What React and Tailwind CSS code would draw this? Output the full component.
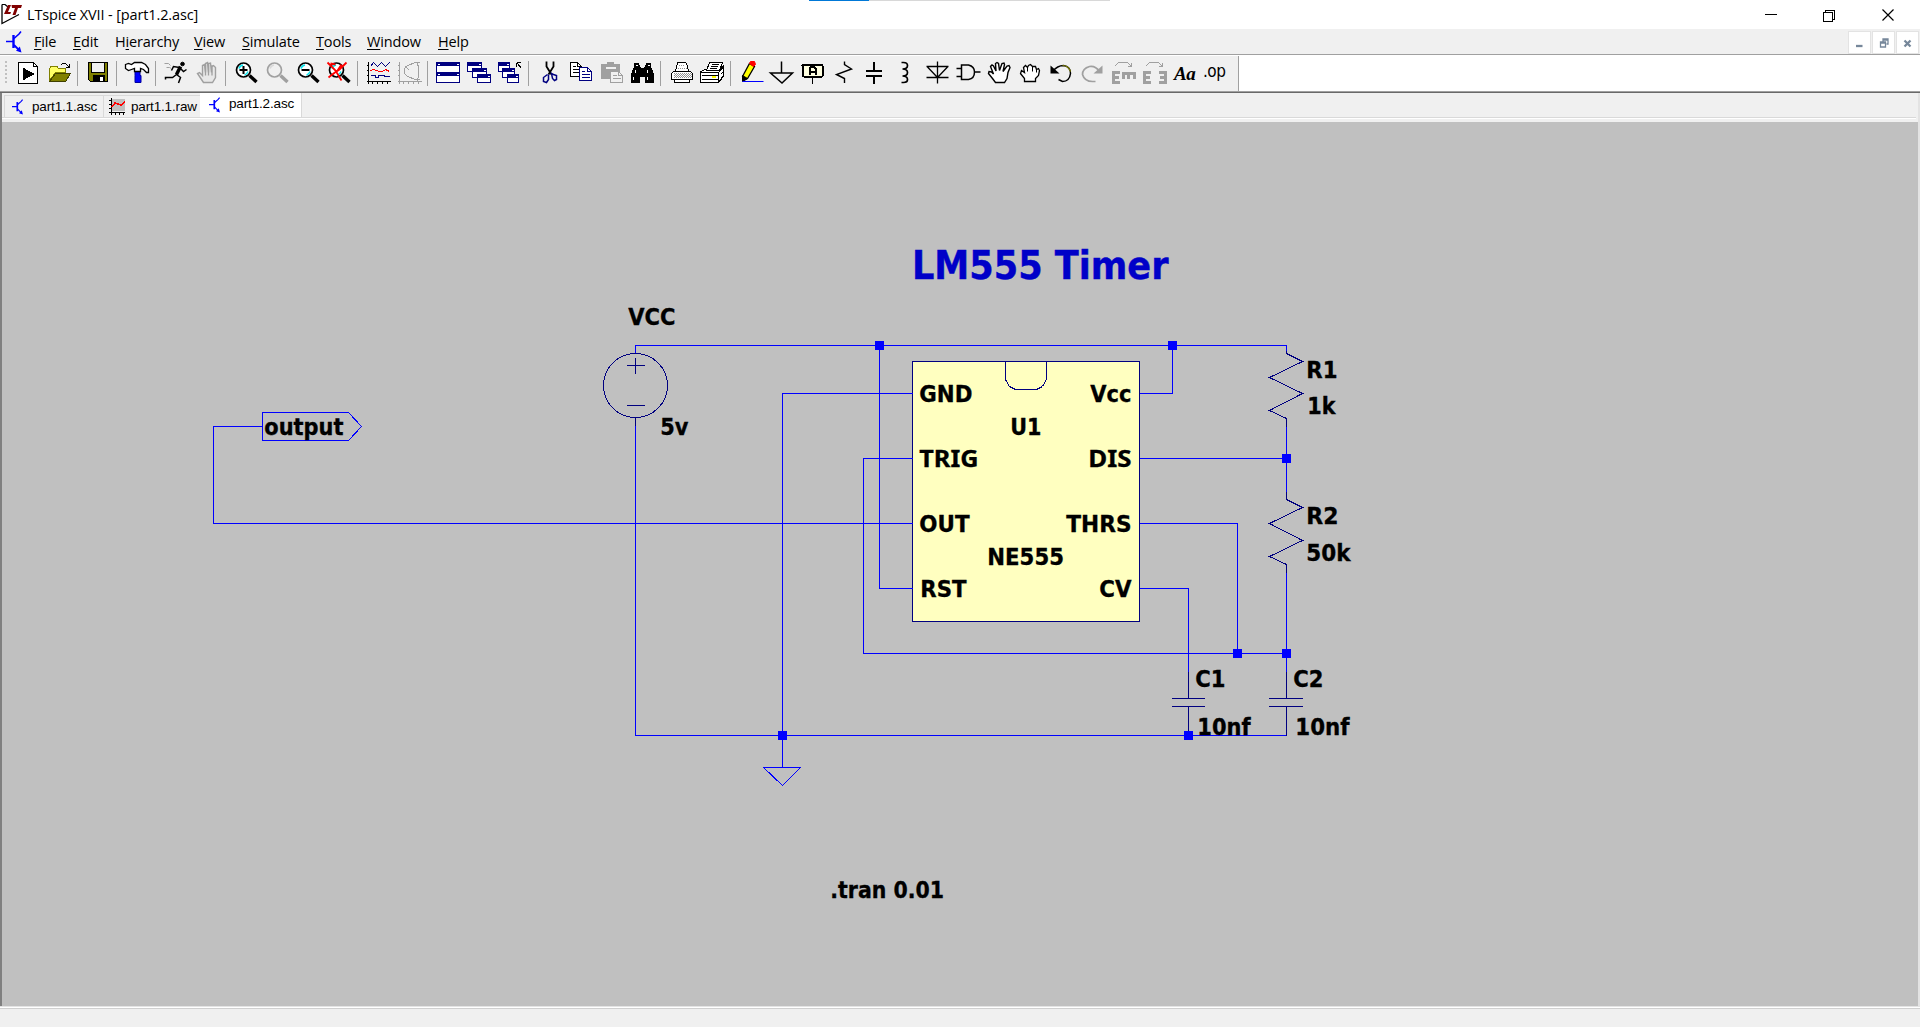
import React from "react";

const Ico = ({ children, smooth }) => (
  <div className="w-[31px] shrink-0 pl-1">
    <svg width="25" height="25" viewBox="0 0 25 25" fill="none" stroke="black" shapeRendering={smooth ? "auto" : "crispEdges"} className="overflow-visible">
      <g transform="translate(.5 .5)">{children}</g>
    </svg>
  </div>
);

const Sep = () => (
  <div className="w-2 shrink-0 pl-[3px]">
    <div className="h-[25px] w-px bg-[#a0a0a0]" />
  </div>
);

const Mag = ({ c = "black", gray, children }) => (
  <Ico smooth>
    <path d="M15 14 L22 20.5" stroke={c} strokeWidth="3.4" />
    <circle cx="9" cy="8.5" r="7" stroke={c} strokeWidth="1.7" fill={gray ? "#f0f0f0" : "white"} />
    <path d="M4.5 7 Q5.5 4 8.5 3.5" stroke={gray ? "#d8d8d8" : "#00e5ee"} strokeWidth="1.6" />
    {!gray && <path d="M13.5 10 Q12.5 13 10 13.6" stroke="#00e5ee" strokeWidth="1.4" />}
    {children}
  </Ico>
);

const Win = ({ x, y, w = 14, h = 9 }) => (
  <g stroke="#000080">
    <rect x={x} y={y} width={w} height={h} fill="white" />
    <rect x={x} y={y} width={w} height="3" fill="#000080" />
    <path d={`M${x + w - 3} ${y + 1.5}h2`} stroke="white" />
  </g>
);

const Transistor = ({ w, h }) => (
  <svg width={w} height={h} viewBox="0 0 17 22" fill="none" stroke="#0000ff" className="shrink-0">
    <path d="M0 10.5H7M15 0.500L13 3L8 7.5" strokeWidth="1.6" />
    <path d="M7.5 4V17" strokeWidth="2.4" />
    <path d="M8 14L14 20" strokeWidth="1.8" />
    <path d="M15.5 21.5L10 19.8L13.8 15.5Z" fill="#0000ff" stroke="none" />
  </svg>
);

const openHand = "M8 21 L5 17 L1 12 L1.5 10 L4 10.5 L6 12.5 L3 5 L4.5 3.5 L6 4.5 L8.5 9.5 L8 2 L9.5 1 L11 2 L12 9 L14.5 2 L16.5 1.5 L17 3 L15.5 10 L19.5 4.5 L21.5 4 L22.5 6 L20.500 11 L19.500 17 L17 21 Z";

function Toolbar() {
  const g = "#a0a0a0";
  return (
    <div className="flex h-[35px] w-[1239px] items-start border-r border-[#a0a0a0] bg-[#f0f0f0] pt-[5px]">
      <div className="flex w-3 shrink-0 flex-col gap-[2px] pl-[5px]">
        {[0, 1, 2, 3, 4, 5].map((i) => <div key={i} className="h-[2px] w-[2px] bg-[#c0c0c0]" />)}
      </div>
      <Ico>
        <path d="M2 1H17L21 5V22H2Z" fill="white" />
        <path d="M17 1V5H21" />
        <path d="M7 7L17 12.5L7 18Z" fill="black" />
      </Ico>
      <Ico>
        <path d="M2 19V7L4 4.5H9L11 7H18V11H8Z" fill="#ffff66" stroke="#808000" />
        <path d="M2 20L8 12H23L18 20Z" fill="#808000" stroke="#404000" />
        <path d="M13 4L15 2H18L22 6M22 2V6H18" />
      </Ico>
      <Sep />
      <Ico>
        <path d="M2 1H21V20H4L2 18Z" fill="#808000" />
        <rect x="5" y="1" width="13" height="10" fill="#f0f0f0" />
        <rect x="7" y="14" width="11" height="6" fill="black" />
        <rect x="14" y="16" width="2" height="3" fill="white" stroke="white" />
      </Ico>
      <Sep />
      <Ico smooth>
        <path d="M9.500 9H14.500V14H15.500V21H9.500V14Z" fill="#0000ff" stroke="#0000a0" />
        <path d="M0 3L3 2L6 3L9 1H16L20 3L23 7V11H21L18 8L15 7V10H9V7L6 8L3 9L0 7Z" fill="white" strokeWidth="1.3" />
      </Ico>
      <Sep />
      <Ico smooth>
        <circle cx="18" cy="2.5" r="1.8" fill="black" />
        <path d="M16 5L12 13" strokeWidth="3.5" />
        <path d="M15 6L9 5L7 9M16 7L19 10L22 8M12 13L16 16L14 21.5M12 13L8 16L1 16V18" strokeWidth="1.5" />
        <path d="M0 2H4L6 4M2 6H5L7 7" stroke={g} />
      </Ico>
      <Ico smooth>
        <path d="M8 21L2 12L4 11L7 14V4L9 3L10 11V2L12 1L13 11V2L15 1.5L16 11V5L18 4L20 6V16L17 21Z" stroke={g} fill="#e8e8e8" strokeWidth="1.4" />
        <path d="M10 3V14M13 3V14M16.500 4V14" stroke={g} strokeWidth="1.3" />
      </Ico>
      <Sep />
      <Mag><path d="M5 8.5H13M9 4.5V12.5" strokeWidth="2" /></Mag>
      <Mag c={g} gray />
      <Mag><path d="M5 8.5H13" strokeWidth="2" /></Mag>
      <Mag>
        <path d="M0 1L4 5L8 9L14 19M19 1L12 8L6 12L1 16M3 2L8 3M5 13L10 9L14 3" stroke="#ff0000" strokeWidth="1.8" />
      </Mag>
      <Sep />
      <Ico>
        <path d="M2 0V22M0 20H24M0 4H2M0 9H2M0 14H2M6 20V22M11 20V22M16 20V22M21 20V22" />
        <path d="M4 5L7 1L11 5L15 1L19 5L23 1M4 14H9V16H12V14H18V15H23" stroke="#000080" />
        <path d="M4 9L7 8L10 9L13 10H16L19 8L23 10" stroke="#ff0000" />
      </Ico>
      <Ico>
        <g stroke={g}>
          <path d="M2 0V22M0 20H24M0 4H2M0 9H2M0 14H2M6 20V22M11 20V22M16 20V22M21 20V22" />
          <path d="M10 4L7 7V12L10 15M22 1H18L10 4M21 3V16M22 18H18L10 15M8 5L12 9M20 4V0M20 16V19" />
        </g>
      </Ico>
      <Sep />
      <Ico>
        <Win x={0} y={1} w={23} h={10} />
        <Win x={0} y={11} w={23} h={10} />
        <path d="M1 2.5H3M1 12.5H3" stroke="white" />
      </Ico>
      <Ico><Win x={0} y={1} /><Win x={5} y={7} /><Win x={10} y={13} w={13} h={8} /></Ico>
      <Ico>
        <Win x={0} y={1} w={11} /><Win x={4} y={7} w={12} /><Win x={9} y={13} w={11} h={8} />
        <path d="M18 1H22M18 1V5M19 2L23 7" />
      </Ico>
      <Sep />
      <Ico smooth>
        <path d="M9 0V5L14 13M16 0V5L11 13" strokeWidth="1.8" />
        <path d="M10 13L6 16V20L9 21L11 18V13M14 12L15 17L17 19L19 18V14L16 13Z" stroke="#000080" strokeWidth="1.5" />
      </Ico>
      <Ico>
        <path d="M2 1H9L13 5V15H2Z" fill="white" /><path d="M9 1V5H13M4 5H7M4 8H11M4 11H11" />
        <path d="M11 6H19L23 10V19H11Z" fill="white" stroke="#000080" /><path d="M19 6V10H23M13 10H16M13 13H21M13 16H21" stroke="#000080" />
      </Ico>
      <Ico>
        <path d="M2 3H8V1H14V3H20V17H2Z" fill={g} stroke={g} /><path d="M6 6H16" stroke="#f0f0f0" strokeWidth="2" />
        <path d="M11 10H19L23 14V21H11Z" fill="#f0f0f0" stroke={g} /><path d="M19 10V14H23M13 14H17M13 17H21" stroke={g} />
      </Ico>
      <Ico>
        <path d="M4 2H8L10 7H14L16 2H20V5L23 13V21H15V15H9V21H1V13L4 5Z" fill="black" />
        <path d="M5 4H7M17 4H19M5 8V11M17 8V11M3 15V18M17 15V18" stroke="white" strokeWidth="1.4" />
      </Ico>
      <Sep />
      <Ico>
        <path d="M6 10L8 1H16L18 4L19 10H21L23 12V18H20V21H5V18H2V12L4 10Z" fill="white" />
        <path d="M9 4H15M8 7H17M4 12H22M4 14H22M4 16H22" stroke="#909090" strokeDasharray="1 1" />
        <path d="M5 13H22M5 15H22" stroke="#909090" strokeDasharray="1 1" />
        <path d="M5 18H20M4 10H20" />
      </Ico>
      <Ico>
        <path d="M0 10L5 8H20L23 4V15L18 21H0Z" fill="white" /><path d="M0 11H18V21M18 11L23 6M1 14H18M1 18H18" />
        <path d="M6 9L9 1H22L19 9Z" fill="white" /><path d="M11 3H18M10 5H17M9 7H16M20 13L22 11M20 17L22 15" />
        <path d="M11 15H15" stroke="#ffff00" strokeWidth="2" />
      </Ico>
      <Sep />
      <Ico smooth>
        <path d="M3 15L10 2L15 5L8 17L4 19Z" fill="#ffff00" strokeWidth="1.3" />
        <path d="M11 0H15L16 3L14 5L10 2Z" fill="#ff0000" stroke="#ff0000" /><path d="M3 14L8 17L3 20Z" fill="black" />
        <path d="M3 20H24" stroke="#0000ff" />
      </Ico>
      <Ico smooth><path d="M11 0V11.5M0 11.5H22L11.5 21.5Z" strokeWidth="1.5" /></Ico>
      <Ico>
        <rect x="1" y="3" width="20" height="12" rx="1" fill="#ffffe0" strokeWidth="2" /><path d="M11 16V22" />
        <path d="M8 13V7L10 5H12L14 7V13M8 10H14" strokeWidth="2" />
      </Ico>
      <Ico smooth><path d="M12 0V3L19 7.5L4 13L12 17V21.5" strokeWidth="1.4" /></Ico>
      <Ico><path d="M10.500 0V9M10.500 15V22" strokeWidth="1.4" /><path d="M2.500 9H18.500M2.500 14H18.500" strokeWidth="2" /></Ico>
      <Ico smooth><path d="M7 1H9Q13 1 13 4Q13 7.5 8 7.5Q13 7.5 13 11Q13 14.5 8 14.5Q13 14.5 13 18Q13 21 9 21H7" strokeWidth="1.7" /></Ico>
      <Ico smooth><path d="M12 0V22M1 5H23M2 5.5L12 16L22 5.5M1 16H23" strokeWidth="1.3" /></Ico>
      <Ico smooth><path d="M5 3.500H12Q18 5 18 10.500Q18 17 12 18H5ZM0 7H5M0 15H5M18 10.500H24" strokeWidth="1.5" /></Ico>
      <Ico smooth><path d={openHand} fill="white" strokeWidth="1.4" /></Ico>
      <Ico smooth>
        <path d="M6 20V17L2 12L3 9L6 11L5 6L7 4L9 6L10 4L12 3L14 5L17 5L18 8L20 7L21 9L20 14L17 17V20Z" fill="white" strokeWidth="1.3" />
        <path d="M9 6V10M14 5V10M18 8V11" />
      </Ico>
      <Ico smooth>
        <path d="M3 10Q8 4 14 4Q21 5 21 12Q20 20 13 20L9 18" strokeWidth="1.5" /><path d="M1 4V12H10Z" fill="black" stroke="none" />
        <path d="M13 4Q19 4 21 10" stroke="#808000" strokeWidth="1.2" />
      </Ico>
      <Ico smooth>
        <path d="M19 10Q15 4 9 5Q2 7 2 13Q4 20 12 20H15" stroke={g} strokeWidth="1.7" /><path d="M22 4V12H13Z" fill={g} stroke="none" />
      </Ico>
      <Ico>
        <g fill={g} stroke="none">
          <path d="M0 9.500H8V12.500H3V14.500H7V17H3V19H8V22H0Z" />
          <path d="M10 10.500H24V17.500H21V13.500H18.500V17.500H15.500V13.500H13V17.500H10Z" />
        </g>
        <path d="M3 5L7 1H16L20 5M20 1V5H16" stroke={g} />
      </Ico>
      <Ico>
        <g fill={g} stroke="none">
          <path d="M0 9.500H8V12.500H3V14.500H7V17H3V19H8V22H0Z" />
          <path d="M24 9.500H16V12.500H21V14.500H17V17H21V19H16V22H24Z" />
        </g>
        <path d="M3 5L7 1H16L20 5M20 1V5H16" stroke={g} />
      </Ico>
      <div className="h-[25px] w-[31px] shrink-0 pl-[5px] font-['Liberation_Serif',serif] text-[19px] font-bold italic leading-[25px] tracking-[-0.5px] text-black">Aa</div>
      <div className="h-[25px] w-[31px] shrink-0 pl-[3px] font-['DejaVu_Sans_Condensed','DejaVu_Sans',sans-serif] text-[17px] leading-[21px] tracking-[-0.5px] text-black">.op</div>
    </div>
  );
}

const labels = [
  ["VCC", 629, 675, 324.5], ["5v", 661, 688, 434.5], ["output", 265, 343, 434.5],
  ["GND", 920, 972, 402], ["Vcc", 1091, 1131, 402], ["U1", 1011, 1041, 434.5],
  ["TRIG", 920, 978, 467, 1], ["DIS", 1089, 1131, 467, 1], ["OUT", 920, 969, 532],
  ["THRS", 1067, 1131, 532], ["NE555", 988, 1063.5, 565], ["RST", 921, 966, 597],
  ["CV", 1100, 1131, 597], ["R1", 1307, 1337, 378], ["1k", 1308, 1335, 414],
  ["R2", 1307, 1338, 524], ["50k", 1307, 1350, 561], ["C1", 1196, 1225, 687],
  ["10nf", 1198, 1250, 735], ["C2", 1294, 1323, 687], ["10nf", 1296, 1349, 735],
  [".tran 0.01", 831, 943.5, 898],
];

const junctions = [[879, 345], [1172, 345], [1286, 458], [1237, 653], [1286, 653], [1188, 735], [782, 735]];

function Schematic() {
  return (
    <svg width="1920" height="884" viewBox="0 122 1920 884" className="block" fill="none">
      <g transform="translate(.5 .5)" shapeRendering="crispEdges">
        <rect x="912" y="361" width="227" height="260" fill="#ffffc0" stroke="#000080" />
        <g stroke="#0000ff">
          <path d="M635 353V345H1286V350M635 425V735H1286M782 767V393H912M912 458H863V653H1286M213 523H912M262 426H213V523M912 588H879V345M1139 393H1172V345M1139 458H1286M1139 523H1237V653M1139 588H1188V671M1286 426V491M1286 572V671" />
          <path d="M262 412H348L361 426L348 440H262Z" />
          <path d="M763 767H800L782 785Z" />
        </g>
        <g stroke="#000080">
          <circle cx="635" cy="385" r="32" />
          <path d="M635 417V425M626.500 365H644.500M635 357V373M626.500 405H644.500" />
          <path d="M1005 361V379L1009 386L1015 389H1036L1042 386L1046 379V361" />
          <path d="M1286 350V353L1302 361L1269 377L1302 393L1269 410L1286 418V426M1286 491V499L1302 507L1269 523L1302 540L1269 556L1286 564V572" />
          <path d="M1188 671V698M1171.500 698H1204.500M1171.500 706H1204.500M1188 706V735M1286 671V698M1268.500 698H1302.500M1268.500 706H1302.500M1286 706V735" />
        </g>
      </g>
      {junctions.map(([x, y]) => <rect key={`${x}-${y}`} x={x - 4} y={y - 4} width="9" height="9" fill="#0000ff" />)}
      <g className="font-['DejaVu_Sans_Condensed','DejaVu_Sans',sans-serif] text-[22.5px] font-bold" fill="black" stroke="black" strokeWidth="0.3">
        {labels.map(([t, a, b, y, serif], i) => (
          <text key={i} x={a - 0.7} y={y} textLength={b - a + 1.2} lengthAdjust="spacingAndGlyphs" className={serif ? "font-['Noto_Sans',sans-serif]" : ""}>{t}</text>
        ))}
      </g>
      <text x="912" y="279" textLength="256.5" lengthAdjust="spacingAndGlyphs" fill="#0000c8" stroke="#0000c8" strokeWidth="0.4" className="font-['DejaVu_Sans_Condensed','DejaVu_Sans',sans-serif] text-[38.5px] font-bold">LM555 Timer</text>
    </svg>
  );
}

const menus = [
  ["F", "ile", "w-[39px]"], ["E", "dit", "w-[42px]"], ["H", "ierarchy", "w-[79px]", 1], ["V", "iew", "w-[48px]"],
  ["S", "imulate", "w-[74px]"], ["T", "ools", "w-[51px]"], ["W", "indow", "w-[71px]"], ["H", "elp", "w-[50px]"],
];

export default function App() {
  return (
    <div className="flex h-[1027px] w-[1920px] flex-col overflow-hidden bg-[#f0f0f0] font-['Open_Sans',sans-serif] text-black">
      <div className="relative flex h-[29px] items-center bg-white">
        <div className="absolute left-[809px] top-0 flex h-px">
          <div className="w-[60px] bg-[#0078d7]" /><div className="w-[241px] bg-[#d8d8d8]" />
        </div>
        <svg width="21" height="21" viewBox="0 0 21 21" className="ml-[1px] mt-[-1px]" fill="none">
          <path d="M1 0.5V19.5L18 10.5" stroke="black" strokeWidth="1.3" />
          <path d="M1 .5H4L7 3" stroke="black" strokeWidth="1.2" />
          <path d="M7 1H10L7 8H10L9.300 10H3Z" fill="#800000" />
          <path d="M10.500 1H21L20 4H17L14.500 11H11.500L14 4H11Z" fill="#800000" />
        </svg>
        <div className="ml-[5px] w-[180px] whitespace-nowrap text-[14.5px] leading-[29px] tracking-[-0.13px]">LTspice XVII - [part1.2.asc]</div>
        <svg width="150" height="20" viewBox="0 0 150 20" className="ml-auto mr-3" stroke="black" fill="none" shapeRendering="crispEdges">
          <path d="M7 9.500H19" />
          <path d="M65.500 7.500H74.500V16.500H65.500ZM67.500 7.500V5.500H76.500V14.500H74.500" />
          <path d="M124.500 4.500L135.500 15.500M135.500 4.500L124.500 15.500" shapeRendering="auto" strokeWidth="1.2" />
        </svg>
      </div>

      <div className="flex h-[25px] items-center">
        <div className="ml-[6px] w-[28px]"><Transistor w={17} h={22} /></div>
        {menus.map(([a, b, w, h]) => (
          <div key={a + b} className={`${w} whitespace-nowrap text-[14.5px] leading-[25px] tracking-[-0.15px]`}>
            {h ? <>H<u className="underline-offset-2">i</u>erarchy</> : <><u className="underline-offset-2">{a}</u>{b}</>}
          </div>
        ))}
        <div className="ml-auto mr-[1px] flex gap-[1px] pt-[2px]">
          {["M7.500 14.500H14", "M8 10.500H13V15.500H8ZM8 11.500H13M10.500 10V7.500H15.500V12.500H14M10 8.500H15", "M8 9L14 15M14 9L8 15"].map((d, i) => (
            <div key={i} className="h-[23px] w-[23px] border border-[#e3e3e3] bg-white">
              <svg width="21" height="21" viewBox="0 0 21 21" stroke="#76879a" fill="none" strokeWidth={i === 1 ? 1.3 : 2.3}><path transform="translate(-.5 -.5)" d={d} /></svg>
            </div>
          ))}
        </div>
      </div>

      <div className="flex h-[37px] border-t border-[#a0a0a0] bg-white pt-px">
        <Toolbar />
      </div>
      <div className="h-[2px] shrink-0 border-b border-[#696969] bg-[#a0a0a0]" />

      <div className="flex h-[29px] shrink-0 flex-col border-l-2 border-r-2 border-l-[#808080] border-r-[#e3e3e3]">
        <div className="flex h-[24px] items-end pl-[2px] font-['Liberation_Sans',sans-serif] text-[13.5px] tracking-[-0.15px]">
          <div className="flex h-[22px] w-[99px] items-center border-l border-t border-[#d9d9d9] pl-[7px]">
            <Transistor w={12} h={16} /><span className="ml-[8px] pt-px">part1.1.asc</span>
          </div>
          <div className="flex h-[22px] w-[97px] items-center border-l border-t border-[#d9d9d9] pl-[5px]">
            <svg width="17" height="17" viewBox="0 0 17 17" fill="none" shapeRendering="crispEdges" className="shrink-0">
              <path d="M3 1H16V13H3Z" fill="#c0c0c0" /><path d="M2.500 0V17M0 14.500H16M0 2.500H2M0 6.500H2M0 10.500H2M6.500 14V17M10.500 14V17M14.500 14V17" stroke="black" />
              <path d="M3 9L6 5L9 6L12 7L16 4" stroke="#ff0000" strokeWidth="1.5" />
            </svg>
            <span className="ml-[5px] pt-px">part1.1.raw</span>
          </div>
          <div className="flex h-[24px] w-[102px] items-center border-r border-[#d9d9d9] bg-white pb-px pl-[9px]">
            <Transistor w={12} h={16} /><span className="ml-[8px]">part1.2.asc</span>
          </div>
        </div>
        <div className="mr-[2px] h-[2px] border-t border-[#d9d9d9] bg-white" />
      </div>
      <div className="h-[884px] shrink-0 border-l-2 border-r-2 border-l-[#808080] border-r-[#e3e3e3] bg-[#c0c0c0]">
        <div className="-ml-[2px] w-[1918px] overflow-hidden"><Schematic /></div>
      </div>
      <div className="h-[3px] shrink-0 border-b border-t border-b-[#d0d0d0] border-t-[#e3e3e3] bg-white" />
      <div className="grow bg-[#f0f0f0]" />
    </div>
  );
}
